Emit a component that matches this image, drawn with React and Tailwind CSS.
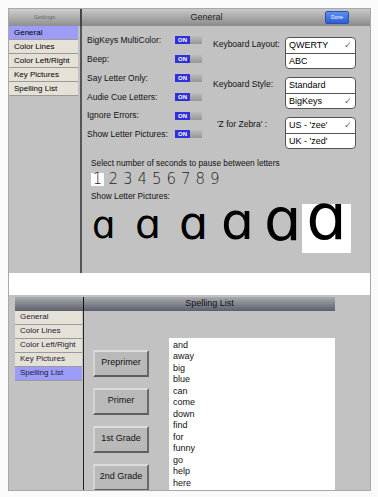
import React from "react";

const font = { fontFamily: '"Liberation Sans", Arial, sans-serif' };

const menu = ["General", "Color Lines", "Color Left/Right", "Key Pictures", "Spelling List"];

const toggles = [
  "BigKeys MultiColor:",
  "Beep:",
  "Say Letter Only:",
  "Audie Cue Letters:",
  "Ignore Errors:",
  "Show Letter Pictures:",
];

const words = ["and", "away", "big", "blue", "can", "come", "down", "find", "for", "funny", "go", "help", "here"];

const grades = ["Preprimer", "Primer", "1st Grade", "2nd Grade"];

function Toggle() {
  return (
    <div className="flex h-[8px] w-[27px]">
      <div className="flex w-[15px] items-center justify-center bg-[#2f2fdc] text-[6px] font-bold leading-none text-white">
        ON
      </div>
      <div className="flex-1 bg-gradient-to-b from-[#bcbcbc] to-[#979797]" />
    </div>
  );
}

function OptionBox({ items }) {
  return (
    <div className="w-[71px] overflow-hidden rounded-[4px] border border-[#555] bg-white">
      {items.map((it, i) => (
        <div
          key={it.label}
          className={`flex h-[15px] items-center justify-between px-[3px] text-[9px] leading-none text-black ${
            i > 0 ? "border-t border-[#555]" : ""
          }`}
        >
          <span>{it.label}</span>
          {it.checked && <span className="text-[9px] text-[#5a6a8a]">✓</span>}
        </div>
      ))}
    </div>
  );
}

function SideMenu({ active, width, textColor }) {
  return (
    <div className={width}>
      {menu.map((m) => (
        <div
          key={m}
          className={`flex h-[14px] items-center border-b border-[#9a9a9a] pl-[5px] text-[8px] leading-none ${textColor} ${
            m === active ? "bg-[#9d9df7]" : "bg-[#e6e1d6]"
          }`}
        >
          {m}
        </div>
      ))}
    </div>
  );
}

// letter picture sizes, small to large
const aSizes = [
  { size: "text-[37px]", w: "w-[43px]", pb: "pb-[11px]" },
  { size: "text-[41px]", w: "w-[44px]", pb: "pb-[10px]" },
  { size: "text-[46px]", w: "w-[42px]", pb: "pb-[9px]" },
  { size: "text-[52px]", w: "w-[43px]", pb: "pb-[8px]" },
  { size: "text-[59px]", w: "w-[38px]", pb: "pb-[7px]" },
];

export default function App() {
  return (
    <div className="min-h-screen bg-[#fafafa] pl-[8px] pt-[8px]" style={font}>
      <div className="flex h-[483px] w-[363px] flex-col border border-[#a8a8a8] bg-[#c2c2c2]">
        {/* top screen */}
        <div className="flex h-[264px] flex-col">
          <div className="flex h-[17px]">
            <div className="flex w-[71px] items-center justify-center bg-gradient-to-b from-[#cfcfcf] to-[#8f8f8f] text-[6px] text-[#6a6a6a]">
              Settings
            </div>
            <div className="w-[2px] bg-[#444]" />
            <div className="relative flex flex-1 items-center bg-gradient-to-b from-[#c9c9c9] to-[#8a8a8a] pl-[6px] text-[9px] text-[#222]">
              <span className="flex-1 text-center">General</span>
              <div className="mr-[21px] flex h-[13px] w-[24px] items-center justify-center rounded-[2px] border border-[#2a4fb0] bg-gradient-to-b from-[#5f8ef0] to-[#2d5ed6] text-[5px] text-white">
                Done
              </div>
            </div>
          </div>
          <div className="flex flex-1">
            <div className="w-[71px]">
              <SideMenu active="General" width="w-[69px]" textColor="text-black" />
            </div>
            <div className="w-[2px] bg-[#555]" />
            <div className="flex flex-1 flex-col pl-[5px]">
              <div className="flex">
                <div className="flex w-[126px] flex-col pt-[5px]">
                  {toggles.map((t) => (
                    <div key={t} className="flex h-[18.8px] items-center text-[8.5px] leading-none text-[#111]">
                      <span className="w-[88px] whitespace-nowrap">{t}</span>
                      <Toggle />
                    </div>
                  ))}
                </div>
                <div className="flex flex-col gap-[8px] pt-[11px]">
                  <div className="flex">
                    <span className="flex h-[15px] w-[72px] items-center text-[8.5px] text-[#111]">Keyboard Layout:</span>
                    <OptionBox items={[{ label: "QWERTY", checked: true }, { label: "ABC" }]} />
                  </div>
                  <div className="flex">
                    <span className="flex h-[15px] w-[72px] items-center text-[8.5px] text-[#111]">Keyboard Style:</span>
                    <OptionBox items={[{ label: "Standard" }, { label: "BigKeys", checked: true }]} />
                  </div>
                  <div className="flex">
                    <span className="flex h-[15px] w-[72px] items-center pl-[4px] text-[8.5px] text-[#111]">'Z for Zebra' :</span>
                    <OptionBox items={[{ label: "US - 'zee'", checked: true }, { label: "UK - 'zed'" }]} />
                  </div>
                </div>
              </div>
              <div className="mt-[9px] pl-[4px] text-[8.3px] leading-[10px] text-[#111]">
                Select number of seconds to pause between letters
              </div>
              <div className="mt-[5px] flex pl-[4px]" style={{ fontFamily: '"DejaVu Sans", sans-serif' }}>
                {[1, 2, 3, 4, 5, 6, 7, 8, 9].map((n) => (
                  <span
                    key={n}
                    className={`flex h-[13px] items-center justify-center text-[15px] font-extralight leading-none text-[#222] ${
                      n === 1 ? "mr-[2px] w-[13px] bg-white" : "w-[14.5px]"
                    }`}
                  >
                    {n}
                  </span>
                ))}
              </div>
              <div className="mt-[5px] pl-[4px] text-[8.3px] leading-[10px] text-[#111]">Show Letter Pictures:</div>
              <div className="mt-[3px] flex items-end pl-[5px]" style={{ fontFamily: '"DejaVu Sans", sans-serif' }}>
                {aSizes.map((a, i) => (
                  <span key={i} className={`flex ${a.w} h-[49px] items-end ${a.pb} ${a.size} font-normal leading-[0.9] text-black`}>
                    ɑ
                  </span>
                ))}
                <span className="flex h-[49px] w-[49px] items-end justify-center bg-white pb-[6px] text-[64px] font-normal leading-[0.9] text-black">
                  ɑ
                </span>
              </div>
            </div>
          </div>
        </div>

        {/* gap */}
        <div className="h-[22px] bg-white" />

        {/* bottom screen */}
        <div className="flex flex-1 overflow-hidden">
          <div className="w-[6px]" />
          <div className="flex w-[320px] flex-col pt-[2px]">
            <div className="flex h-[15px]">
              <div className="w-[68px] bg-gradient-to-b from-[#a9abb2] to-[#5d606c]" />
              <div className="w-[1px] bg-[#111]" />
              <div className="flex flex-1 items-center justify-center bg-gradient-to-b from-[#a9abb2] to-[#5d606c] text-[9px] text-[#111]">
                Spelling List
              </div>
            </div>
            <div className="flex flex-1">
              <div className="w-[68px]">
                <SideMenu active="Spelling List" width="w-[67px]" textColor="text-[#1a1a3a]" />
              </div>
              <div className="w-[1px] bg-[#222]" />
              <div className="flex flex-1">
                <div className="flex w-[85px] flex-col gap-[11px] pl-[9px] pt-[39px]">
                  {grades.map((g) => (
                    <div
                      key={g}
                      className="flex h-[27px] w-[56px] shrink-0 items-center justify-center border-2 border-t-[#dcdcdc] border-l-[#d4d4d4] border-r-[#6a6a6a] border-b-[#5e5e5e] bg-[#b9b9b9] text-[9px] text-[#111]"
                    >
                      {g}
                    </div>
                  ))}
                </div>
                <div className="mt-[27px] flex-1 bg-white pl-[4px] pt-[2px]">
                  {words.map((w) => (
                    <div key={w} className="h-[11.5px] text-[9px] leading-[11.5px] text-[#111]">
                      {w}
                    </div>
                  ))}
                </div>
              </div>
            </div>
          </div>
          <div className="flex-1" />
        </div>
      </div>
    </div>
  );
}
